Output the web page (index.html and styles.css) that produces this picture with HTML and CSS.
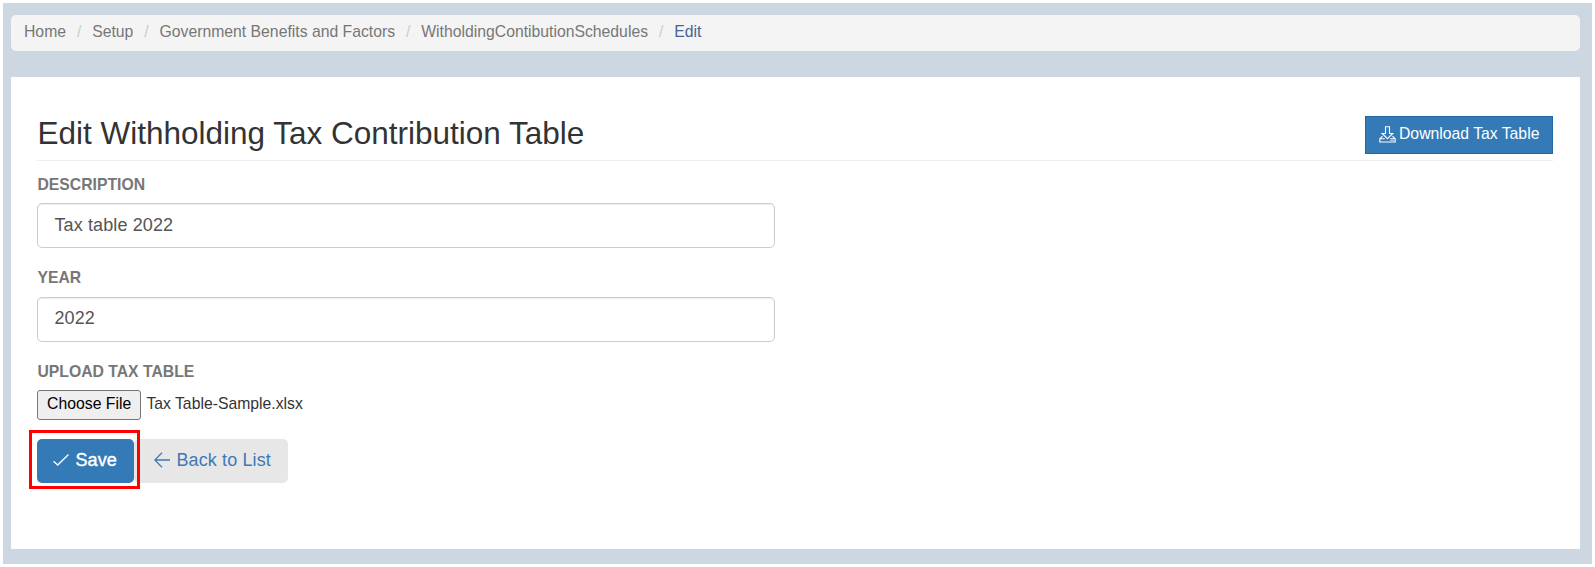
FILE: index.html
```
<!DOCTYPE html>
<html lang="en">
<head>
<meta charset="utf-8">
<title>Edit Withholding Tax Contribution Table</title>
<link rel="stylesheet" href="styles.css">
</head>
<body>
<div class="page">
  <nav class="breadcrumb">
    <a>Home</a><i>/</i><a>Setup</a><i>/</i><a>Government Benefits and Factors</a><i>/</i><a>WitholdingContibutionSchedules</a><i>/</i><a class="active">Edit</a>
  </nav>
  <main class="panel">
    <header class="panel-head">
      <h1 class="title">Edit Withholding Tax Contribution Table</h1>
      <button class="download">
        <svg class="icon-download" viewBox="0 0 17 17"><path d="M6.5 .8h4v6.700h3.300L8.500 12.700 3.200 7.500h3.300zM3.500 10.200 .8 12.800v3.200h15.400v-3.200l-2.700-2.600M.8 12.800h5M11.200 12.800h5M11.500 14.400h1M13.500 14.400h1"/></svg>
        <span>Download Tax Table</span>
      </button>
    </header>
    <form class="form">
      <label class="label label-description">Description</label>
      <div class="input">Tax table 2022</div>
      <label class="label label-year">Year</label>
      <div class="input">2022</div>
      <label class="label label-upload">Upload Tax Table</label>
      <div class="file"><span class="choose">Choose File</span><span class="filename">Tax Table-Sample.xlsx</span></div>
      <div class="actions">
        <div class="btn save"><svg class="icon" viewBox="0 0 16 16"><path d="M.5 9.2 4.7 13 15.5 2.5"/></svg><span>Save</span><div class="highlight"></div></div>
        <div class="btn back"><svg class="icon" viewBox="0 0 16 16"><path d="M16 8H1M8 .8.8 8 8 15.2"/></svg><span>Back to List</span></div>
      </div>
    </form>
  </main>
</div>
</body>
</html>
```
FILE: styles.css
```
* { box-sizing: border-box; }
body { margin: 0; padding: 3px; height: 567px; background: #fff; font-family: "Liberation Sans", Arial, sans-serif; overflow: hidden; }
.page { height: 561px; background: #cdd7e1; padding: 12px 12px 0 8px; }
.breadcrumb { height: 36px; padding: 0 13px; border-radius: 5px; background: #f4f4f4; display: flex; align-items: center; font-size: 15.75px; line-height: 34px; color: #777; white-space: nowrap; }
.breadcrumb a { position: relative; top: -1px; }
.breadcrumb i { width: 26.2px; text-align: center; font-style: normal; color: #ccc; position: relative; top: -1px; }
.breadcrumb .active { color: #4a5f98; }
.panel { margin-top: 26px; height: 471.5px; background: #fff; padding: 39px 27px 0 26.4px; }
.panel-head { height: 45px; border-bottom: 1px solid #eee; display: flex; justify-content: space-between; align-items: flex-start; }
.title { margin: 0; font-size: 31.5px; font-weight: 400; line-height: 34px; color: #333; white-space: nowrap; }
.download { width: 188.5px; height: 38px; padding: 0 0 2px 13px; border: 1px solid #2467a3; background: #337ab7; color: #fff; display: flex; align-items: center; gap: 3.5px; font: 15.75px "Liberation Sans", Arial, sans-serif; white-space: nowrap; }
.icon-download { width: 17px; height: 17px; flex: none; fill: none; stroke: currentColor; stroke-width: 1.1; }
.form { width: 737.6px; }
.label { display: block; height: 42px; padding-top: 15px; font-size: 15.75px; line-height: 18px; font-weight: 700; color: #777; text-transform: uppercase; white-space: nowrap; }
.input { height: 45px; padding: 0 16px; border: 1.5px solid #ccc; border-radius: 5px; box-shadow: inset 0 1px 1px rgba(0,0,0,.07); font-size: 18px; letter-spacing: .12px; line-height: 41px; color: #555; }
.label-description + .input { line-height: 42px; }
.label-year, .label-upload { height: 48.5px; padding-top: 21px; }
.file { height: 30px; display: flex; font-size: 15.75px; line-height: 26px; color: #333; white-space: nowrap; }
.choose { width: 103.5px; border: 1.5px solid #777; border-radius: 3px; background: #efefef; color: #000; text-align: center; }
.filename { margin-left: 5.5px; line-height: 28px; }
.actions { margin-top: 19px; display: flex; }
.btn { height: 44px; padding: 0 0 1px; border-radius: 5px; display: flex; align-items: center; font-size: 18px; letter-spacing: .12px; white-space: nowrap; }
.icon { width: 16px; height: 16px; fill: none; stroke: currentColor; stroke-width: 1.3; margin-right: 6px; flex: none; position: relative; top: -1px; }
.save { position: relative; z-index: 1; width: 96.5px; padding-left: 16px; background: #337ab7; color: #fff; font-weight: 500; }
.save span { -webkit-text-stroke: .4px #fff; }
.highlight { position: absolute; left: -8.4px; top: -9px; width: 111px; height: 59px; border: 3px solid #f00; }
.back { width: 154px; padding-left: 20.5px; background: #e7e7e7; color: #4079b5; }
```
